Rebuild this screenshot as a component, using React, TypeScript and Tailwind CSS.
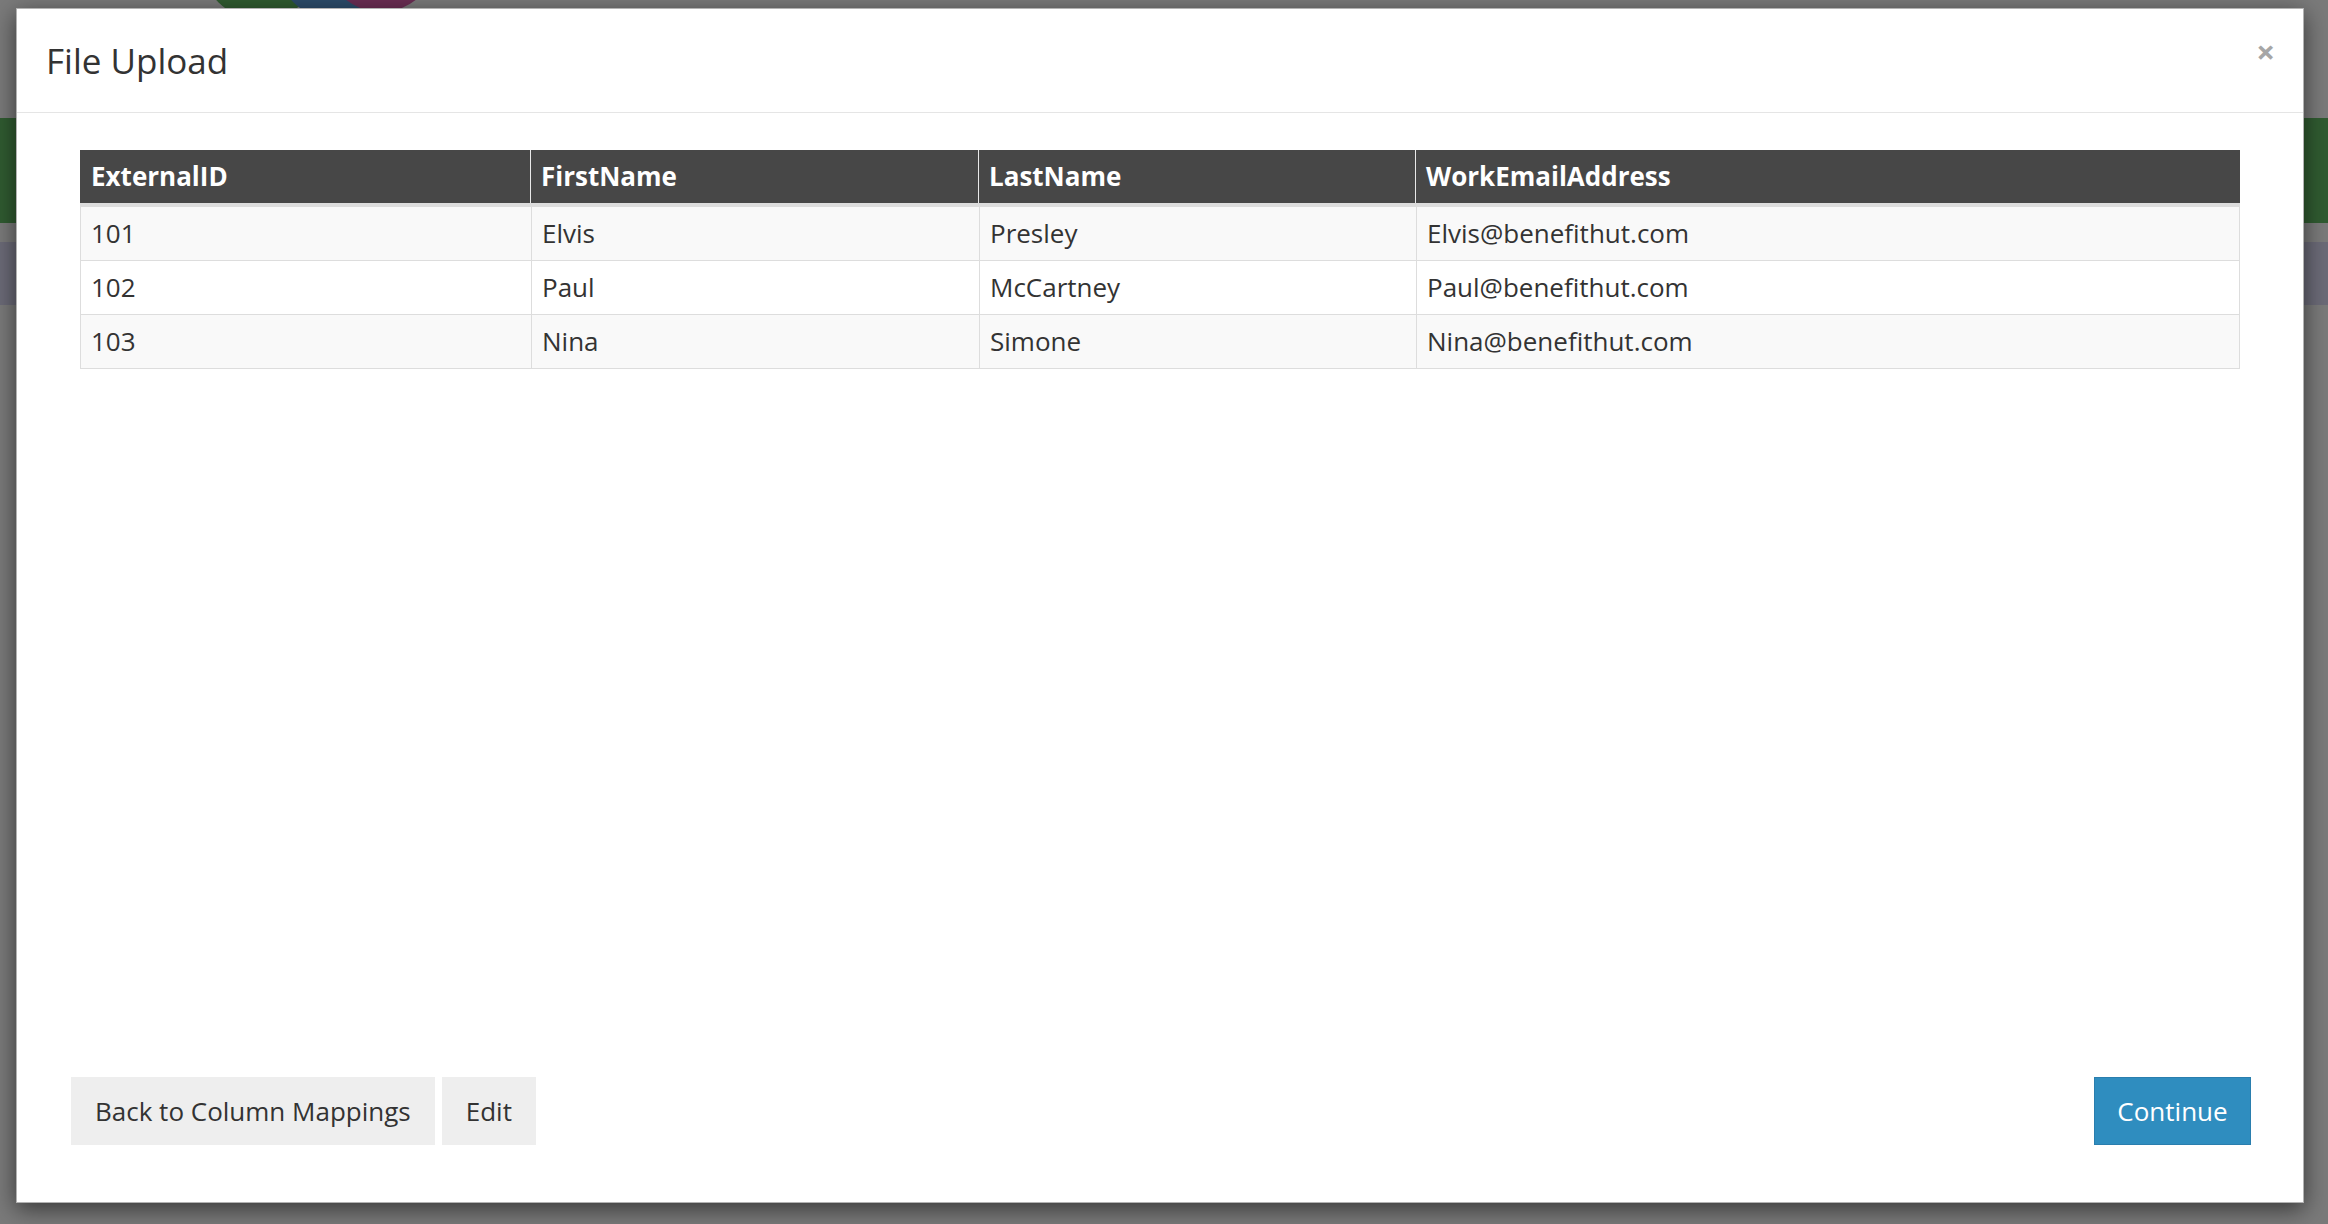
import React from 'react';

const rows = [
  { id: '101', first: 'Elvis', last: 'Presley', email: 'Elvis@benefithut.com' },
  { id: '102', first: 'Paul', last: 'McCartney', email: 'Paul@benefithut.com' },
  { id: '103', first: 'Nina', last: 'Simone', email: 'Nina@benefithut.com' },
];

const cols = 'grid grid-cols-[450px_448px_437px_1fr]';

export default function App() {
  return (
    <div className="relative h-[1224px] w-full overflow-hidden bg-[#7a7a7a] font-['Open_Sans',sans-serif] text-[#333]">
      {/* page behind the backdrop */}
      <div className="h-[118px] overflow-hidden pl-[206px]">
        <svg width="230" height="20" viewBox="0 0 230 20">
          <circle cx="55" cy="-40" r="60" fill="#2f5a2f" />
          <circle cx="130" cy="-40" r="60" fill="#2c4b69" />
          <circle cx="175" cy="-44" r="56" fill="#6a2d53" />
        </svg>
      </div>
      <div className="h-[105px] bg-[#305b31]" />
      <div className="h-[19px]" />
      <div className="h-[63px] bg-[#6b6a77]" />

      {/* modal */}
      <div className="absolute left-[16px] top-[8px] flex h-[1195px] w-[2288px] flex-col border border-black/30 bg-white shadow-[0_6px_22px_rgba(0,0,0,0.55)]">
        <div className="relative flex h-[104px] shrink-0 items-center border-b border-[#e5e5e5] pl-[29px]">
          <h4 className="text-[35px] font-normal leading-none">File Upload</h4>
          <span className="absolute right-[28px] top-[26px] text-[33px] font-bold leading-none text-[#a6a6a6]">×</span>
        </div>

        <div className="flex-1 px-[63px] pt-[37px]">
          <div className="text-[26px]">
            <div className={`${cols} h-[53px] bg-[#474747] text-[26px] font-bold text-white`}>
              <div className="flex items-center pl-[11px]">ExternalID</div>
              <div className="flex items-center border-l border-[#e8e8e8] pl-[10px]">FirstName</div>
              <div className="flex items-center border-l border-[#e8e8e8] pl-[10px]">LastName</div>
              <div className="flex items-center border-l border-[#e8e8e8] pl-[10px]">WorkEmailAddress</div>
            </div>
            <div className="h-[4px] bg-[#dddddd]" />
            {rows.map((r, i) => (
              <div
                key={r.id}
                className={`${cols} h-[54px] border-b border-x border-[#dddddd] ${i % 2 === 0 ? 'bg-[#f9f9f9]' : 'bg-white'}`}
              >
                <div className="flex items-center pl-[10px]">{r.id}</div>
                <div className="flex items-center border-l border-[#dddddd] pl-[10px]">{r.first}</div>
                <div className="flex items-center border-l border-[#dddddd] pl-[10px]">{r.last}</div>
                <div className="flex items-center border-l border-[#dddddd] pl-[10px]">{r.email}</div>
              </div>
            ))}
          </div>
        </div>

        <div className="flex shrink-0 items-center justify-between pb-[57px] pl-[54px] pr-[52px] text-[26px]">
          <div className="flex gap-[7px]">
            <button className="h-[68px] bg-[#eeeeee] px-[24px] text-[#333]">Back to Column Mappings</button>
            <button className="h-[68px] bg-[#eeeeee] px-[24px] text-[#333]">Edit</button>
          </div>
          <button className="h-[68px] w-[157px] border border-[#2a7eae] bg-[#2f8dbf] text-white">Continue</button>
        </div>
      </div>
    </div>
  );
}
